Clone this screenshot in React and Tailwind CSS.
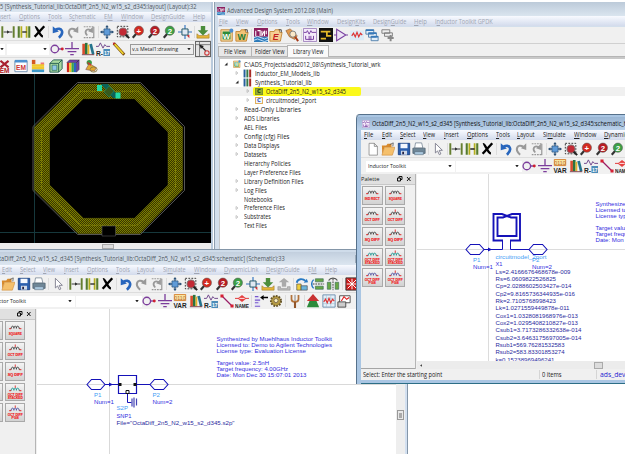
import React, { useLayoutEffect, useRef, useState } from "react";

/* One line of text, squeezed or stretched to the width it is given. */
function Fit({ w, children, className = "" }) {
  const ref = useRef(null);
  const [s, setS] = useState(1);
  useLayoutEffect(() => {
    if (ref.current) setS(w / ref.current.offsetWidth);
  }, [w]);
  return (
    <span className={"inline-block shrink-0 whitespace-nowrap " + className} style={{ width: w }}>
      <span ref={ref} className="inline-block origin-left whitespace-nowrap" style={{ transform: `scaleX(${s})` }}>
        {children}
      </span>
    </span>
  );
}

const Mag = ({ c, t }) => (
  <>
    <path d="M6 10 2 14.5" stroke="#333" strokeWidth="2.4" />
    <circle cx="9" cy="6.5" r="5.3" fill={c} stroke="#555" strokeWidth=".6" />
    <text x="9" y="9.8" fontSize="9" fontWeight="bold" fill="#fff" textAnchor="middle">{t}</text>
  </>
);

const Wave = ({ c = "#d33" }) => (
  <path d="M2 9l2-3 2 4 2-5 2 5 2-4 2 2" fill="none" stroke={c} strokeWidth="1.3" />
);

const icons = {
  new: <path d="M3.5 1.5h6l3.5 3.5v10h-9.5zM9.5 1.5v3.5h3.5" fill="#fff" stroke="#777" strokeWidth=".8" />,
  open: (
    <>
      <path d="M1 4h5l1.5-2H12v4H4L1.5 14z" fill="#d88a2c" />
      <path d="M4 6h12l-3 9H1z" fill="#f5c06c" stroke="#c98532" strokeWidth=".6" />
      <path d="M10 3l4-2-.5 4" fill="none" stroke="#555" strokeWidth=".9" />
    </>
  ),
  save: (
    <>
      <path d="M1.5 1.500h13v13h-13z" fill="#2b5fae" stroke="#173f80" />
      <path d="M4 2h8v5H4z" fill="#f4f8ff" />
      <path d="M4.500 10h7v4.500h-7z" fill="#cfd9e8" />
      <path d="M6 11h2v3H6z" fill="#224" />
    </>
  ),
  print: (
    <>
      <path d="M4 1h7l1.500 6H3z" fill="#fff" stroke="#678" strokeWidth=".8" />
      <path d="M1 7h14v6H1z" fill="#6f8797" stroke="#475a68" strokeWidth=".8" />
      <path d="M3 11h10v3.500H3z" fill="#a9c7dd" stroke="#567" strokeWidth=".6" />
    </>
  ),
  cursor: <path d="M5 1.500v11l2.500-2.300 2 4.300 1.800-.9-2-4.100H13z" fill="#fff" stroke="#778" strokeWidth="1" />,
  g1: (
    <>
      <path d="M1.5 1.500v13M14.500 1.500v13" stroke="#667f30" strokeWidth="2.2" />
      <path d="M3 8h10" stroke="#222" strokeWidth="1" />
      <path d="M7 6v4l2.500-2z" fill="#222" />
    </>
  ),
  g2: (
    <>
      <path d="M2 1.500v13M14 1.500v13" stroke="#567b2c" strokeWidth="2.4" />
      <path d="M5 1.500v13M11 1.500v13" stroke="#b4ae1d" strokeWidth="2" />
      <path d="M6 8h5" stroke="#222" strokeWidth="1.500" />
    </>
  ),
  x: <path d="M3 13.500 8 8l6-6.500M3.500 2.500C5 2 6 5 8 8c1.500 3 3 5 4.500 5" fill="none" stroke="#000" strokeWidth="2.7" />,
  undo: (
    <>
      <path d="M5 5.500c7-4 11 3 4 9" fill="none" stroke="#2866bd" strokeWidth="3" />
      <path d="M2 1.500v8l7-2z" fill="#2866bd" />
    </>
  ),
  redo: (
    <>
      <path d="M11 5.500c-7-4-11 3-4 9" fill="none" stroke="#999" strokeWidth="2.400" />
      <path d="M14 1.500v7.500L8 7z" fill="#999" />
    </>
  ),
  redo2: (
    <>
      <path d="M2 2h11M2 14.500h11" stroke="#999" strokeWidth="1.300" strokeDasharray="2 1" />
      <path d="M10 6c-5-3-8 2-4 6" fill="none" stroke="#999" strokeWidth="2" />
      <path d="M12.500 2v7L7 7z" fill="#999" />
      <path d="M13.500 2v13" stroke="#777" strokeWidth="1" />
    </>
  ),
  pan: (
    <>
      <path d="M8 1v14M1 8h14" stroke="#335f8c" strokeWidth="1.500" />
      <path d="M4.500 4.500h7v7h-7z" fill="#5f9bd8" stroke="#2d5277" strokeWidth=".8" />
      <path d="M6 2.700 8 0l2 2.700zM6 13.300 8 16l2-2.700zM2.700 6 0 8l2.700 2zM13.300 6 16 8l-2.700 2z" fill="#2d5277" />
    </>
  ),
  zsel: (
    <>
      <path d="M1.500 1.500h12v12h-12z" fill="none" stroke="#222" strokeDasharray="2 1.500" />
      <circle cx="8" cy="8" r="4.600" fill="#c32a35" stroke="#777" />
      <path d="M11 11l4 4" stroke="#222" strokeWidth="2.400" />
    </>
  ),
  zin: <Mag c="#d32a20" t="+" />,
  z2: <Mag c="#b71c22" t="2" />,
  zm2: <Mag c="#3ca044" t="2" />,
  fit: (
    <>
      <path d="M8 0v16M0 8h16" stroke="#3272c0" strokeWidth="1.300" />
      <path d="M4.500 4.500h7v7h-7z" fill="#dfe8f2" stroke="#256" strokeWidth="1.100" />
      <path d="M10 12l3 3v-4z" fill="#c33" />
    </>
  ),
  down: (
    <>
      <path d="M5.500 1h5v5H14l-6 6-6-6h3.500z" fill="#4c8d3b" />
      <path d="M1 10v5h14v-5l-2.500 2h-9z" fill="#e5b536" stroke="#98742a" strokeWidth=".6" />
    </>
  ),
  up: (
    <>
      <path d="M5.500 11V6H2l6-5 6 5h-3.500v5z" fill="#aaa" />
      <path d="M1 11v4h14v-4h-3v2H4v-2z" fill="#bbb" stroke="#888" strokeWidth=".6" />
    </>
  ),
  rot: (
    <>
      <path d="M2 6.500c1-5 7-5 10-2" fill="none" stroke="#2879c4" strokeWidth="2.200" />
      <path d="M10 6.500l5-.500-1.500-4z" fill="#2879c4" />
      <path d="M2 8h5v7H2z" fill="#f0cf3c" stroke="#444" strokeWidth=".7" />
      <path d="M7 10h7v5H7z" fill="#6bb5dc" stroke="#444" strokeWidth=".7" />
    </>
  ),
  flip: (
    <>
      <path d="M5 2h9v3.500H5zM5 10.500h9V14H5z" fill="#69a745" stroke="#365" strokeWidth=".7" />
      <path d="M2 8h13" stroke="#222" strokeDasharray="2 1" />
      <path d="M3 3c-3 3-3 7 0 10" fill="none" stroke="#2879c4" strokeWidth="1.600" />
    </>
  ),
  mirror: (
    <>
      <path d="M1.500 6h4v8h-4zM10.500 6h4v8h-4z" fill="#69a745" stroke="#365" strokeWidth=".7" />
      <path d="M8 2v13" stroke="#222" strokeDasharray="2 1" />
      <path d="M3 4c2-3.500 8-3.500 10 0" fill="none" stroke="#555" strokeWidth="1.500" />
    </>
  ),
  redx: (
    <>
      <path d="M1 1h14v14H1z" fill="#cf1d1d" stroke="#333" />
      <path d="M3 3l10 10M13 3 3 13M8 2v12M2 8h12" stroke="#fff" strokeWidth="1.100" />
    </>
  ),
  pin: (
    <>
      <circle cx="5.500" cy="8" r="4.300" fill="none" stroke="#7c3d9c" strokeWidth="1.500" />
      <path d="M10 8h4" stroke="#7c3d9c" strokeWidth="1.500" />
      <circle cx="14" cy="8" r="1.700" fill="#cf2030" />
    </>
  ),
  gnd: <path d="M8 0v7M0 7.500h16M3 11h10M6 14.500h4" fill="none" stroke="#7c3d9c" strokeWidth="1.500" />,
  var: (
    <>
      <path d="M1.500.500h13v7h-13z" fill="#f8e5a0" stroke="#d57b28" />
      <text x="8" y="6.500" fontSize="6" fill="#b63" textAnchor="middle">0110</text>
      <text x="8" y="15.800" fontSize="8" fontWeight="bold" fill="#222" textAnchor="middle" textLength="15" lengthAdjust="spacingAndGlyphs">VAR</text>
    </>
  ),
  lib: (
    <>
      <path d="M1.500 2h3v12h-3z" fill="#d94c2b" />
      <path d="M4.500 1h3v13h-3z" fill="#2b743f" />
      <path d="M7.500 3h2v11h-2z" fill="#e6b429" />
      <path d="M9.500 2.500l3-.500 3 12-3 .500z" fill="#25748c" />
      <path d="M1 14.500h14" stroke="#734" />
    </>
  ),
  r17: (
    <>
      <path d="M0 5h3l2-4 3 6 2-4 2 2h4" fill="none" stroke="#70478d" strokeWidth="1.100" />
      <text x="0" y="15.500" fontSize="8.500" fontWeight="bold" fill="#222" textLength="8" lengthAdjust="spacingAndGlyphs">R-</text>
      <path d="M8.500 8h7.500v8H8.500z" fill="#4c8cb8" />
      <text x="9" y="14.800" fontSize="7" fontWeight="bold" fill="#fff" textLength="6.500" lengthAdjust="spacingAndGlyphs">17</text>
    </>
  ),
  line: (
    <>
      <path d="M2 2l12 12" stroke="#9a1d66" strokeWidth="1.500" />
      <path d="M.500.500h3.500v3.500H.500zM12 12h3.500v3.500H12z" fill="#d62034" />
    </>
  ),
  pencil: (
    <>
      <path d="M2 1.500 14 14.500" stroke="#7a4a12" strokeWidth="3.400" />
      <path d="M3 2.500 13 13.500" stroke="#ead02d" strokeWidth="2" />
      <path d="M.800.500l3 .500-2 2.500z" fill="#c8202c" />
    </>
  ),
  name: (
    <>
      <path d="M0 5h4M12 5h4" stroke="#d22" />
      <path d="M3 5l5-4 5 4-5 4z" fill="#e64040" />
      <path d="M5 5h6" stroke="#fff" />
      <text x="8" y="15.800" fontSize="6.500" fontWeight="bold" fill="#222" textAnchor="middle" textLength="16" lengthAdjust="spacingAndGlyphs">NAME</text>
    </>
  ),
  list: (
    <>
      <path d="M1 2h6v13H1z" fill="#e6e6f4" />
      <path d="M1 3h4M1 7h6M1 10h4M1 14h6" stroke="#75c" strokeWidth="1.300" />
      <path d="M9 4h7" stroke="#000" strokeWidth="1.700" />
      <path d="M7 4l4-3v6z" />
    </>
  ),
  gear: (
    <>
      <circle cx="8" cy="8" r="5.800" fill="#b59a42" stroke="#66552a" strokeWidth="2.200" strokeDasharray="2 1.300" />
      <circle cx="8" cy="7.500" r="2.300" fill="#fff4bd" stroke="#765" />
    </>
  ),
  fork: (
    <>
      <path d="M4 1v5q0 3 4 3t4-3V1" fill="none" stroke="#b2723b" strokeWidth="2" />
      <path d="M8 1v7" stroke="#777" />
      <path d="M8 9v7" stroke="#92562b" strokeWidth="2.400" />
    </>
  ),
  tree: (
    <>
      <path d="M8 0l7 8H1z" fill="#c83131" />
      <path d="M4 8h8l3 7H1z" fill="#2d8a3c" />
    </>
  ),
  wavebox: (
    <>
      <path d="M1 1h14v14H1z" fill="#e5f0fa" stroke="#68a" />
      <path d="M5 1v14M10 1v14M1 5h14M1 11h14" stroke="#9bc" strokeWidth=".6" />
      <Wave />
    </>
  ),
  zig: (
    <>
      <path d="M0 3h16v11H0z" fill="#dcebf6" />
      <Wave />
    </>
  ),
  dds: (
    <>
      <path d="M3 2h12v8H3z" fill="#fff" stroke="#444" />
      <path d="M1 9h9v6H1z" fill="#ccc" stroke="#444" />
      <path d="M5 8l3-5 3 3 3-2" fill="none" stroke="#d22" strokeWidth="1.200" />
    </>
  ),
  emx: (
    <>
      <path d="M3 1l10 8M13 1 3 9" stroke="#a82030" strokeWidth="2.600" />
      <text x="8" y="16" fontSize="8" fontWeight="bold" fill="#b32026" textAnchor="middle">EM</text>
    </>
  ),
  em: (
    <>
      <path d="M1 2h14v12.500H1z" fill="#fff" stroke="#68a" />
      <path d="M1 1h14v3H1z" fill="#4d91cf" />
      <text x="8" y="12" fontSize="7.500" fontWeight="bold" fill="#c33" textAnchor="middle">EM</text>
    </>
  ),
  layers: (
    <>
      <path d="M1 1h4v5H1z" fill="#d45a20" />
      <path d="M11 4h4v3h-4z" fill="#e77" />
      <path d="M1 6h14v3H1z" fill="#f0c92f" />
      <path d="M1 9h14v3H1z" fill="#f0c92f" />
      <path d="M1 12h14v3H1z" fill="#3d98c9" />
    </>
  ),
  cube: (
    <>
      <path d="M1 5l4-4h10v10l-4 4H1z" fill="#a9d9a0" stroke="#1c574b" />
      <path d="M1 5h10v10M11 5l4-4" fill="none" stroke="#1c574b" />
      <path d="M3.500 7h5.500v6H3.500z" fill="#8fc6ea" stroke="#2c6e58" strokeWidth=".8" />
    </>
  ),
  rain: (
    <>
      <path d="M1 4h2.700v11H1z" fill="#cf2720" />
      <path d="M3.700 4h2.600v11H3.700z" fill="#f3c326" />
      <path d="M6.300 4H9v11H6.300z" fill="#38a44c" />
      <path d="M9 4h3v11H9z" fill="#2865c4" />
      <path d="M1 4l3-3h11l-3 3zM12 4l3-3v11l-3 3z" fill="#6c3fa8" stroke="#333" strokeWidth=".5" />
    </>
  ),
  lamp: (
    <>
      <circle cx="6" cy="4" r="3" fill="#3a9b44" />
      <path d="M6 5l-4 7 10 2 2-4z" fill="#dfa934" stroke="#745" strokeWidth=".6" />
      <ellipse cx="11" cy="12" rx="4" ry="3" fill="none" stroke="#8a7a3a" />
      <path d="M4 4l4 3" stroke="#c33" strokeWidth="1.500" />
    </>
  ),
  snap: (
    <>
      <path d="M4 0v16M0 3h16" stroke="#555" strokeWidth=".8" />
      <path d="M4.500 3.500 11 10" stroke="#222" strokeWidth="1.300" />
      <path d="M4 3l5 1.500L5.500 8z" fill="#222" />
      <circle cx="12.500" cy="12.500" r="2.500" fill="none" stroke="#c33" strokeWidth="1.200" />
    </>
  ),
  wnew: (
    <>
      <path d="M1 2h13v13H1z" fill="#f3d9a2" stroke="#c28431" />
      <path d="M3 4h9v9H3z" fill="#2e8b3b" />
      <text x="7.500" y="12" fontSize="9" fontWeight="bold" fill="#fff" textAnchor="middle">W</text>
      <circle cx="13" cy="3" r="2.300" fill="#4b8ed0" />
    </>
  ),
  wopen: (
    <>
      <path d="M1 4h5l1-2h5v3h3l-2 10H1z" fill="#f2c376" stroke="#c28431" />
      <text x="7.500" y="13.500" fontSize="10" fontWeight="bold" fill="#1d7a34" textAnchor="middle">W</text>
      <path d="M11 2h3v3" fill="none" stroke="#333" />
    </>
  ),
  eopen: (
    <>
      <path d="M1 4h5l1-2h5v3h3l-2 10H1z" fill="#f5cf95" stroke="#c28431" />
      <text x="7.500" y="13.500" fontSize="10" fontWeight="bold" fontStyle="italic" fill="#c32020" textAnchor="middle">E</text>
      <path d="M11 2h3v3" fill="none" stroke="#333" />
    </>
  ),
  ads: (
    <>
      <path d="M0 0h16v10H0z" fill="#8b1f5e" />
      <path d="M0 10h16v6H0z" fill="#2d7bb9" />
      <path d="M2 3v6M4 3h3v6M9 3v6l3-6v6M14 3v4" stroke="#fff" strokeWidth="1.200" fill="none" />
      <path d="M0 11q4-3 8 0t8 0M0 14q4-3 8 0t8 0" stroke="#d3ecff" fill="none" />
    </>
  ),
  hand: (
    <>
      <path d="M1 3l5-2 8 8-3 4-6-3z" fill="#e49b4c" stroke="#8b542a" strokeWidth=".7" />
      <circle cx="9" cy="7" r="3.500" fill="#fbe8c8" stroke="#777" />
      <path d="M11.500 10l3.500 5" stroke="#a63c1d" strokeWidth="2.300" />
    </>
  ),
  sch: (
    <>
      <path d="M.500.500h15v15H.500z" fill="#f4eafa" stroke="#9a7cba" />
      <path d="M1 5h3l1-2 2 4 2-4 1 2h5M3 9v4h9V9M7 9v5M9 9v5" fill="none" stroke="#7840a0" strokeWidth="1.100" />
    </>
  ),
  lay: (
    <>
      <path d="M0 0h16v16H0z" fill="#111" />
      <path d="M2 4h7v5h5M2 12h6M9 4h4" fill="none" stroke="#e5b928" strokeWidth="2" />
    </>
  ),
  amp: <path d="M0 8h3M13 8h3M3 1.500v13L13.500 8z" fill="#eee4f6" stroke="#7840a0" strokeWidth="1.200" />,
  win: (
    <>
      <path d="M1 2h9v5H1zM4 5.500h9v5H4zM7 9.500h8v5H7z" fill="#e2eef8" stroke="#4879a8" />
      <path d="M1 2.500h9M4 6h9M7 10h8" stroke="#3679ba" strokeWidth="1.800" />
    </>
  ),
  wing: (
    <>
      <path d="M1 2h9v4H1zM4 5.500h9v4H4z" fill="#eee" stroke="#777" />
      <path d="M11 8v7M7.500 11.500h7" stroke="#888" strokeWidth="2.200" />
    </>
  ),
  books: (
    <>
      <path d="M1 1h3.500v14H1z" fill="#275f9d" />
      <path d="M6 1h3.500v14H6z" fill="#35784a" />
      <path d="M11 1h3.500v14H11z" fill="#a72a25" />
    </>
  ),
};

function Icon({ n, className = "size-[14px]" }) {
  return (
    <svg viewBox="0 0 16 16" className={"shrink-0 " + className} fontFamily="Liberation Sans, sans-serif">
      {icons[n]}
    </svg>
  );
}

/* "|" in the list stands for a thin separator. */
function Icons({ list }) {
  return list.map((n, i) =>
    n === "|" ? (
      <span key={i} className="flex w-[3px] shrink-0 justify-center">
        <span className="h-3 w-px bg-[#dcdcdc]" />
      </span>
    ) : (
      <span key={i} className="flex w-[15.5px] shrink-0 justify-center">
        <Icon n={n} />
      </span>
    )
  );
}

function MenuBar({ items, className }) {
  return (
    <div className={"flex h-[10px] shrink-0 items-center gap-2 bg-linear-to-b from-[#f8faff] to-[#d3dbec] pb-px text-[6.2px] leading-[9px] " + className}>
      {items.map(([t, w, u]) => (
        <Fit key={t} w={w}>
          {t.slice(0, u)}
          <span className="underline decoration-[0.5px] underline-offset-1">{t[u]}</span>
          {t.slice(u + 1)}
        </Fit>
      ))}
    </div>
  );
}

const Caret = () => (
  <svg viewBox="0 0 4 3" className="h-[2.5px] w-[4px] shrink-0">
    <path d="M0 0h4L2 3z" fill="#222" />
  </svg>
);

const schematicMenu = [
  ["File", 9.5, 0], ["Edit", 10, 0], ["Select", 15.5, 0], ["View", 12.5, 0], ["Insert", 15, 0],
  ["Options", 21, 0], ["Tools", 13.5, 0], ["Layout", 18, 0], ["Simulate", 22.5, 2], ["Window", 22, 0],
  ["DynamicLink", 34.5, 0], ["DesignGuide", 34, 0], ["EM", 8.5, 1], ["Help", 12, 0],
];

const palette = [
  ["IND RECT"], ["SQUARE"], ["OCT DIFF"], ["OCT DIFF"], ["SQ DIFF"], ["SQ DIFF"],
  ["OCT DIFF", "STACKED"], ["OCT DIFF", "STACKED"], ["OCT DIFF", "PGS"], ["OCT DIFF", "PGS"],
];

function PaletteButton({ lines, tap }) {
  const two = lines.length > 1;
  const coil = lines[1] === "STACKED" ? "#0b8f8a" : lines[1] === "PGS" ? "#44449a" : "#333";
  return (
    <div className="h-[18.5px] w-[20.5px] border border-[#a9a9a9] bg-linear-to-b from-[#f4f4f4] to-[#d2d2d2]">
      <svg viewBox="0 0 19 17" className="h-full w-full" fontFamily="Liberation Sans, sans-serif">
        <path d="M4.500 6.500h1c0-3 2.600-3 2.600 0 0-3 2.600-3 2.600 0 0-3 2.600-3 2.600 0h1" fill="none" stroke={coil} strokeWidth=".9" />
        <path d="M3.200 6.900h2M13.800 6.900h2" stroke="#d22" strokeWidth="1" />
        {tap && <path d="M9.500 1.500v2.500" stroke="#d22" strokeWidth=".9" />}
        {lines.map((t, i) => (
          <text key={t} x="9.500" y={two ? 11.900 + i * 4 : 13} fontSize="4.200" fontWeight="bold" fill="#f01818" stroke="#f01818" strokeWidth=".15" textAnchor="middle"
            textLength={t.length > 6 ? 15.500 : t.length > 3 ? 13.500 : 7.500} lengthAdjust="spacingAndGlyphs">{t}</text>
        ))}
      </svg>
    </div>
  );
}

function SchematicWindow({ active, title, titleWidth, children, footer }) {
  return (
    <div className={"flex h-full flex-col overflow-hidden rounded-tl-[4px] border-l pl-[4px] pt-[2px] " + (active ? "border-[#56718b] bg-[#aac6e3]" : "border-[#8fa2b5] bg-[#cfdcea]")}>
      <div className={"-ml-[4px] flex h-[13px] shrink-0 items-center pl-[5px] text-[6.2px] leading-[10px] " + (active ? "bg-linear-to-b from-[#9ab6d4] to-[#b9d1ea] text-[#111]" : "bg-linear-to-b from-[#c2cfde] to-[#dce6f0] text-[#4e5660]")}>
        <Icon n="sch" className="size-[8px]" />
        <Fit w={titleWidth} className="ml-[2px]">{title}</Fit>
        {!active && <span className="ml-[70px] h-[8px] w-[18px] border border-[#9eacbb] bg-[#d5e0ec]" />}
      </div>
      <MenuBar items={schematicMenu} className={"pl-[3px] " + (active ? "text-[#222]" : "text-[#a0a5b2]")} />
      <div className="flex h-[17px] shrink-0 items-center bg-[#f1f1f1] pl-[4px]">
        <Icons list={["new", "open", "save", "print", "|", "cursor", "|", "g1", "g2", "x", "|", "undo", "redo", "redo2", "|", "pan", "zsel", "zin", "z2", "zm2", "fit", "down", "up", "|", "rot", "flip", "mirror", "|", "redx"]} />
      </div>
      <div className="flex h-[17px] shrink-0 items-center border-t border-[#dddddd] bg-[#f1f1f1] pl-[5px] text-[6px] leading-[9px] text-[#222]">
        <div className="flex h-[11px] w-[88.5px] shrink-0 items-center justify-between bg-white pr-[3px] pl-[2px]">
          <Fit w={38}>Inductor Toolkit</Fit>
          <Caret />
        </div>
        <div className="ml-px flex h-[11px] w-[66px] shrink-0 items-center justify-end bg-white pr-[3px]">
          <Caret />
        </div>
        <Icons list={["pin", "gnd", "var", "lib", "r17", "line", "name", "|", "list", "gear", "|", "fork", "|", "tree", "wavebox", "dds"]} />
      </div>
      <div className="flex min-h-0 flex-1 bg-[#f0f0f0]">
        <div className="flex w-[55px] shrink-0 flex-col border-r border-[#b5b5b5]">
          <div className="flex h-[11px] shrink-0 items-center border-b border-[#c8c8c8] bg-[#e0e0e0] pr-[4px] text-[6px] leading-[9px] text-[#222]">
            <Fit w={18}>Palette</Fit>
            <svg viewBox="0 0 14 6" className="ml-auto h-[6px] w-[14px]">
              <path d="M.500 2h3v3h-3zM2 2V.500h3v3H4M10 1l3.500 4M13.500 1 10 5" fill="none" stroke="#111" strokeWidth="1" />
            </svg>
          </div>
          <div className={"grid grid-cols-[20.5px_20.5px] content-start gap-x-[2px] gap-y-[2.1px] pt-[1px] pl-[1px] " + (active ? "flex-1 border-b border-[#a5a5a5]" : "")}>
            {palette.map((p, i) => (
              <PaletteButton key={i} lines={p} tap={i % 2 === 1 && i > 1} />
            ))}
          </div>
        </div>
        <div className="flex min-w-0 flex-1 flex-col pl-[1px]">{children}</div>
      </div>
      {footer}
    </div>
  );
}

const T = ({ x, y, w, c = "#332de0", s = 6.2, children }) => (
  <text x={x} y={y + 2.2} fontSize={s} fill={c} textLength={w} lengthAdjust="spacingAndGlyphs">{children}</text>
);

const notes = [
  ["Synthesized by Muehlhaus Inductor Toolkit", 0, 115.5],
  ["Licensed to: Demo to Agilent Technologies", 6, 115.5],
  ["License type: Evaluation License", 12, 89.5],
  ["Target value: 2.5nH", 24, 52.5],
  ["Target frequency: 4.00GHz", 30, 71.5],
  ["Date: Mon Dec 30 15:07:01 2013", 36, 90],
];

const Notes = ({ x, y }) => notes.map(([t, dy, w]) => <T key={t} x={x} y={y + dy} w={w}>{t}</T>);

const Port = ({ x, y }) => (
  <path d={`M${x} ${y}l4.500-5h9l4.500 5-4.500 5h-9z`} fill="none" stroke="#1512b8" strokeWidth="1.100" />
);

const params = [
  ["Ls=2.4166676468678e-009", 75], ["Rs=6.0609822526825", 60.500], ["Cp=2.0288602503427e-014", 76], ["Cp2=9.8165736344935e-016", 79.500],
  ["Rk=2.7105768998423", 60.500], ["Lk=1.0271559449878e-011", 74], ["Cox1=1.0328081968976e-013", 82.500],
  ["Cox2=1.0295408210827e-013", 82.500], ["Csub1=3.7173286332638e-014", 86], ["Csub2=3.6463175697005e-014", 86],
  ["Rsub1=569.76281532583", 69], ["Rsub2=583.83301853274", 69], ["k=0.15238969496241", 59],
];

const BLUE = "#1512b8";
const SKY = "#3f9df5";

function InductorDrawing() {
  return (
    <svg viewBox="417 174 208 187" className="h-[187px] w-[208px] shrink-0 bg-white" fontFamily="Liberation Sans, Arial, sans-serif">
      <path d="M488.500 174v187M417 249.500h208" stroke="#dcdcdc" />
      <Notes x={595.500} y={204} />
      <Port x={466} y={249.500} />
      <Port x={529} y={249.500} />
      <g fill="none" stroke={BLUE}>
        <path d="M484 249.500h18.500V240M529 249.500h-18.500V240" />
        <path d="M503 240.500h-9.500v-26.500h8.500l9 3.500h5.500v18.500h-19v-18.500h5.500l9-3.500h8v26.500H510" strokeWidth="1.900" />
      </g>
      <path d="M488 247.500l4 2-4 2z" fill={BLUE} />
      <T x={473} y={259.500} w={7.500} c={SKY}>P1</T>
      <T x={532} y={259.500} w={7.500} c={SKY}>P2</T>
      <T x={473} y={267} w={20}>Num=1</T>
      <T x={532} y={267} w={20}>Num=2</T>
      <T x={495.500} y={257} w={51} c={SKY}>circuitmodel_2port</T>
      <T x={495.500} y={264} w={7}>X1</T>
      {params.map(([t, w], i) => (
        <T key={t} x={495.500} y={271.300 + i * 7.360} w={w} c="#2a2a9e">{t}</T>
      ))}
    </svg>
  );
}

function S2PDrawing() {
  return (
    <svg viewBox="36 309 359 145" className="h-[145px] w-[359px] shrink-0 bg-white" fontFamily="Liberation Sans, Arial, sans-serif">
      <path d="M108.500 309v145M36 384.500h359" stroke="#d9d9d9" />
      <Notes x={215.500} y={339} />
      <Port x={86} y={384.500} />
      <Port x={149} y={384.500} />
      <g fill="none" stroke={BLUE}>
        <path d="M117.500 375.500h18v18h-18z" strokeWidth="1.200" />
        <path d="M104 384.500h13.500M135.500 384.500h13.500M126.500 393.500v9h4" />
        <path d="M131 398.500v8M133 397.500v10M135.500 398.500v7" stroke="#4444b5" strokeWidth="1.200" />
      </g>
      <path d="M108 382.500l4 2-4 2z" fill={BLUE} />
      <path d="M117.500 383h3v3h-3zM132.500 383h3v3h-3z" fill="#111" />
      <path d="M125 390.500h3v3h-3z" fill="#fff" stroke="#111" />
      <T x={93} y={394.500} w={7.500} c={SKY}>P1</T>
      <T x={151.500} y={394.500} w={7.500} c={SKY}>P2</T>
      <T x={93} y={402} w={20}>Num=1</T>
      <T x={151.500} y={402} w={20}>Num=2</T>
      <T x={115.500} y={408} w={11.500} c={SKY}>S2P</T>
      <T x={115.500} y={415.500} w={15}>SNP1</T>
      <T x={115.500} y={423} w={118} c="#2a2a9e">File="OctaDiff_2n5_N2_w15_s2_d345.s2p"</T>
    </svg>
  );
}

function LayoutDrawing() {
  return (
    <svg viewBox="0 74 211 169" className="h-[169px] w-[211px] shrink-0 bg-black">
      <defs>
        <pattern id="mesh" width="2" height="2" patternUnits="userSpaceOnUse">
          <path d="M0 0h2v2H0z" fill="#353500" />
          <path d="M0 0h1v1H0zM1 1h1v1H1z" fill="#7d7d00" />
        </pattern>
      </defs>
      <path d="M34.500 74v169M0 232.500h211" stroke="#16383c" />
      <path d="M77.500 82.500h63l44 44v64l-44 44h-63l-44.500-44v-64z" fill="none" stroke="#555" />
      <path fillRule="evenodd" fill="url(#mesh)" stroke="#77770a" strokeWidth=".4"
        d="M78 84h62l42.500 43v63L140 233.500H78L34.500 190v-63zM83.500 98.700 49.500 132v53l34 33.300h51l33.500-33.300v-53l-33.500-33.300z" />
      <path d="M80.500 91.200h57l38 38v58.500l-38 37.500h-57l-39-37.500v-58.500z" fill="none" stroke="#848408" strokeWidth="1.100" strokeDasharray="2 .7" />
      <path d="M102 226h13.500v10H102z" fill="#000" stroke="#555" strokeWidth=".6" />
      <path d="M101 84h7l12 14h-7z" fill="#0c6258" />
      <path d="M104 92l5-6 5 5-5 6z" fill="#36591c" stroke="#1a8c6c" strokeWidth=".6" />
      <path d="M97 85h5v6h-5zM115.500 92.500h5v6h-5z" fill="#23dba4" />
    </svg>
  );
}

const layoutMenu = [
  ["Insert", 15, 1], ["Options", 21, 0], ["Tools", 13.5, 0], ["Schematic", 27, 1], ["EM", 8.5, 1],
  ["Window", 22, 0], ["DesignGuide", 34, 0], ["Help", 12, 0],
];

function LayoutWindow() {
  return (
    <div className="flex h-full flex-col border-r-2 border-[#b9cadc] bg-[#f1f1f1] pt-[2px]">
      <div className="flex h-[13px] shrink-0 items-center bg-linear-to-b from-[#c2cfde] to-[#dce6f0] pt-[2px] text-[6.2px] leading-[10px] text-[#4e5660]">
        <Fit w={197}>5 [Synthesis_Tutorial_lib:OctaDiff_2n5_N2_w15_s2_d345:layout] (Layout):32</Fit>
      </div>
      <MenuBar items={layoutMenu} className="-ml-[4.500px] text-[#a0a5b2]" />
      <div className="mt-px flex h-[17px] shrink-0 items-center overflow-hidden pl-[0.5px]">
        <Icons list={["g1", "g2", "x", "|", "undo", "redo", "redo2", "|", "pan", "zsel", "zin", "z2", "zm2", "fit", "|", "down"]} />
      </div>
      <div className="flex h-[17px] shrink-0 items-center overflow-hidden border-t border-[#dddddd] text-[6px] leading-[9px] text-[#222]">
        <div className="flex h-[11px] w-[5px] shrink-0 items-center bg-white"><Caret /></div>
        <div className="ml-[1.500px] flex h-[11px] w-[42.500px] shrink-0 items-center justify-end bg-white pr-[2px]"><Caret /></div>
        <Icons list={["pin", "gnd", "lib", "r17", "pencil"]} />
        <div className="ml-[3px] flex h-[11px] w-[64px] shrink-0 items-center justify-between border border-[#999] bg-[#eee] px-[1.500px]">
          <Fit w={46}>v,s Metal1:drawing</Fit>
          <Caret />
        </div>
        <div className="ml-[1px] flex h-[16px] w-[16px] shrink-0 items-center justify-center border border-[#666] bg-[#e4e4e4]">
          <Icon n="snap" />
        </div>
      </div>
      <div className="flex h-[17px] shrink-0 items-center gap-[2px] border-t border-[#dddddd]">
        <Icon n="emx" className="-ml-[2px] size-[13px]" />
        <Icons list={["em", "layers", "cube", "rain", "lamp"]} />
      </div>
      <LayoutDrawing />
      <div className="flex h-[6px] shrink-0 items-center bg-[#ededed]">
        <span className="ml-[102px] h-[5px] w-[12px] border border-[#aaa] bg-[#ddd]" />
      </div>
    </div>
  );
}

const mainMenu = [
  ["File", 9, 0], ["View", 13, 0], ["Options", 20.5, 0], ["Tools", 13.5, 0], ["Window", 21.5, 0],
  ["DesignKits", 28, 6], ["DesignGuide", 33.5, 6], ["Help", 12.5, 0], ["Inductor Toolkit GPDK", 58, 1],
];

/* label, width, depth, arrow (o = open, c = closed), icon */
const tree = [
  ["C:\\ADS_Projects\\ads2012_08\\Synthesis_Tutorial_wrk", 137, 0, "o", "wnew"],
  ["Inductor_EM_Models_lib", 65, 1, "c", "books"],
  ["Synthesis_Tutorial_lib", 57, 1, "o", "books"],
  ["OctaDiff_2n5_N2_w15_s2_d345", 80, 2, "c", "cell"],
  ["circuitmodel_2port", 50, 2, "c", "cell"],
  ["Read-Only Libraries", 56.5, 1, "c"],
  ["ADS Libraries", 35, 1, "c"],
  ["AEL Files", 23, 1],
  ["Config (cfg) Files", 45, 1, "c"],
  ["Data Displays", 35.5, 1, "c"],
  ["Datasets", 22.5, 1, "c"],
  ["Hierarchy Policies", 46.5, 1],
  ["Layer Preference Files", 56.5, 1],
  ["Library Definition Files", 59, 1, "c"],
  ["Log Files", 23, 1, "c"],
  ["Notebooks", 29, 1],
  ["Preference Files", 41, 1, "c"],
  ["Substrates", 27, 1, "c"],
  ["Text Files", 23, 1],
];

const indents = ["pl-[4px]", "pl-[15px]", "pl-[26px]"];

function TreeRow({ row: [label, w, depth, arrow, icon] }) {
  const hot = label.startsWith("Octa");
  return (
    <div className={"flex h-[8.98px] items-center " + indents[depth] + (hot ? " bg-[#f0f0f0]" : "")}>
      <span className="flex w-[6px] shrink-0 items-center">
        {arrow && (
          <svg viewBox="0 0 4 4" className="size-[4px]">
            {arrow === "o" ? <path d="M3.500.500v3h-3z" fill="#222" /> : <path d="M1 .500 3 2 1 3.500z" fill="none" stroke="#aaa" strokeWidth=".6" />}
          </svg>
        )}
      </span>
      <span className={"flex h-full items-center " + (hot ? "ml-[1px] w-[108px] rounded-[2px] bg-[#fbf91b]" : "")}>
        {icon === "cell" && (
          <span className={"flex h-[7px] w-[8px] shrink-0 items-center justify-center border text-[6px] leading-[6px] font-bold " + (hot ? "ml-[2px] border-[#7b9130] bg-[#94ad30] text-[#143d16]" : "ml-[3px] border-[#e0b15e] bg-[#eef3ff] text-[#2549b5]")}>C</span>
        )}
        {icon === "books" && <Icon n="books" className="ml-[2px] size-[9px]" />}
        {icon === "wnew" && <Icon n="wnew" className="ml-[3px] size-[8px]" />}
        <Fit w={w} className={icon === "books" ? "ml-[2.5px]" : "ml-[3px]"}>{label}</Fit>
      </span>
    </div>
  );
}

function MainWindow() {
  return (
    <div className="flex h-full flex-col border-l border-[#8f9fb0] bg-[#d3dfec] pl-[3px]">
      <div className="-ml-[3px] flex h-[14px] shrink-0 items-center bg-linear-to-b from-[#bccad9] to-[#dae5ef] pt-[3px] pl-[2px] text-[6.2px] leading-[10px] text-[#4e5660]">
        <Icon n="ads" className="size-[8px]" />
        <Fit w={106} className="ml-[2px]">Advanced Design System 2012.08 (Main)</Fit>
      </div>
      <MenuBar items={mainMenu} className="mb-[1px] pt-px pl-[1px] text-[#a0a5b2]" />
      <div className="flex h-[17px] shrink-0 items-center border-b border-[#d0d0d0] bg-[#f0f0f0] pl-[1px]">
        <Icons list={["wnew", "wopen", "|", "ads", "eopen", "hand", "|", "sch", "lay", "amp", "zig", "win", "wing"]} />
      </div>
      <div className="flex h-[13px] shrink-0 items-end border-b border-[#b5b5b5] bg-[#f0f0f0] text-[6.2px] leading-[9px] text-[#222]">
        <div className="flex h-[10px] w-[34px] items-center justify-center border border-b-0 border-[#b5b5b5] bg-[#e8e8e8]"><Fit w={22}>File View</Fit></div>
        <div className="flex h-[10px] w-[35px] items-center justify-center border-t border-[#b5b5b5] bg-[#e8e8e8]"><Fit w={29}>Folder View</Fit></div>
        <div className="-mb-px flex h-[12px] w-[42px] items-center justify-center border border-b-0 border-[#b5b5b5] bg-[#fafafa]"><Fit w={30}>Library View</Fit></div>
      </div>
      <div className="ml-[1px] flex-1 border-t-2 border-l border-[#c8c8c8] bg-white pt-[1px] text-[6.2px] leading-[9px] text-[#1c1c1c]">
        {tree.map((r) => <TreeRow key={r[0]} row={r} />)}
      </div>
    </div>
  );
}

export default function App() {
  return (
    <div className="relative h-[454px] w-[628px] overflow-hidden border-t-2 border-r-[3px] border-white bg-white font-['Open_Sans',sans-serif]">
      <div className="absolute -top-[5px] left-0 h-[252px] w-[213px]">
        <LayoutWindow />
      </div>
      <div className="absolute top-0 left-[214px] h-[247px] w-[411px]">
        <MainWindow />
      </div>
      <div className="absolute top-[247px] left-[-24px] h-[207px] w-[432px] border-t border-r border-[#8496a8]">
        <SchematicWindow title="OctaDiff_2n5_N2_w15_s2_d345 [Synthesis_Tutorial_lib:OctaDiff_2n5_N2_w15_s2_d345:schematic] (Schematic):33" titleWidth={292.5}>
          <div className="flex">
            <S2PDrawing />
            <div className="w-[9px] shrink-0 bg-[#eeeeee] pt-[101px] pl-[1px]">
              <div className="flex h-[10px] w-[7px] items-center justify-center border border-[#999] bg-[#e8e8e8]">
                <span className="h-[5px] w-[3px] bg-[#aaa]" />
              </div>
            </div>
            <div className="h-[150px] w-[4px] shrink-0 bg-[#d3e0f0]" />
          </div>
        </SchematicWindow>
      </div>
      <div className="absolute top-[112px] left-[356px] h-[270px] w-[280px] rounded-tl-[4px] border-t border-[#56718b]">
        <SchematicWindow
          active
          title="OctaDiff_2n5_N2_w15_s2_d345 [Synthesis_Tutorial_lib:OctaDiff_2n5_N2_w15_s2_d345:schematic_h"
          titleWidth={255}
          footer={
            <div className="h-[15px] shrink-0 border-b border-[#2c6e86] bg-[#aac6e3] pb-[3px] text-[6.2px] leading-[9px] text-[#222]">
              <div className="flex h-[11px] items-center bg-[#f0f0f0] pl-[2px]">
                <Fit w={79}>Select: Enter the starting point</Fit>
                <span className="ml-[97px] h-[9px] w-px bg-[#d5d5d5]" />
                <Fit w={19.5} className="ml-[2px]">0 items</Fit>
                <span className="ml-[34px] h-[9px] w-px bg-[#d5d5d5]" />
                <Fit w={34} className="ml-[3px] text-[#2320d0]">ads_device</Fit>
              </div>
            </div>
          }
        >
          <InductorDrawing />
          <div className="flex h-[8px] shrink-0 items-center bg-[#ececec] pl-[3px]">
            <svg viewBox="0 0 3 4" className="h-[3px] w-[2px]"><path d="M3 0v4L0 2z" fill="#444" /></svg>
            <span className="ml-[172px] h-[7px] w-[9px] border border-[#aaa] bg-[#dcdcdc]" />
          </div>
        </SchematicWindow>
      </div>
    </div>
  );
}
